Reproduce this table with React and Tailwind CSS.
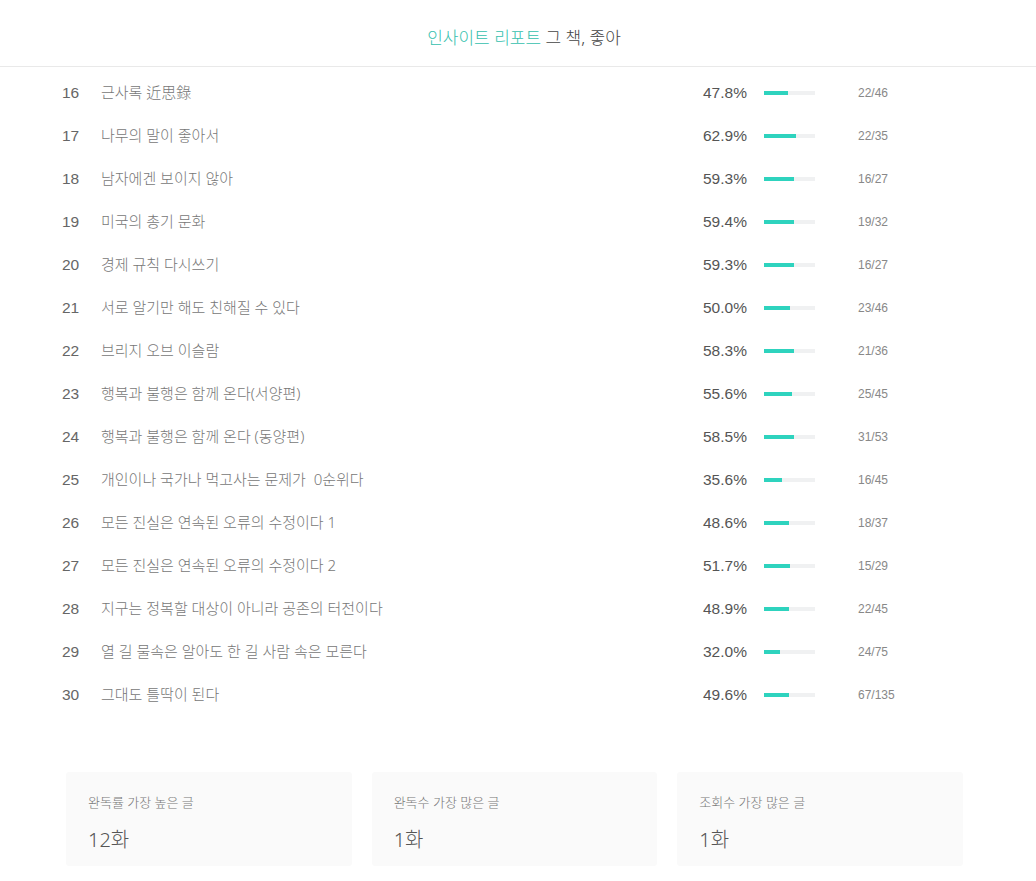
const rows = [
  [16, '근사록 近思錄', 47.8, '22/46'],
  [17, '나무의 말이 좋아서', 62.9, '22/35'],
  [18, '남자에겐 보이지 않아', 59.3, '16/27'],
  [19, '미국의 총기 문화', 59.4, '19/32'],
  [20, '경제 규칙 다시쓰기', 59.3, '16/27'],
  [21, '서로 알기만 해도 친해질 수 있다', 50.0, '23/46'],
  [22, '브리지 오브 이슬람', 58.3, '21/36'],
  [23, '행복과 불행은 함께 온다(서양편)', 55.6, '25/45'],
  [24, '행복과 불행은 함께 온다 (동양편)', 58.5, '31/53'],
  [25, '개인이나 국가나 먹고사는 문제가  0순위다', 35.6, '16/45'],
  [26, '모든 진실은 연속된 오류의 수정이다 1', 48.6, '18/37'],
  [27, '모든 진실은 연속된 오류의 수정이다 2', 51.7, '15/29'],
  [28, '지구는 정복할 대상이 아니라 공존의 터전이다', 48.9, '22/45'],
  [29, '열 길 물속은 알아도 한 길 사람 속은 모른다', 32.0, '24/75'],
  [30, '그대도 틀딱이 된다', 49.6, '67/135'],
];

const cards = [
  ['완독률 가장 높은 글', '12화'],
  ['완독수 가장 많은 글', '1화'],
  ['조회수 가장 많은 글', '1화'],
];

const num = { fontFamily: '"Liberation Sans", sans-serif' };

export default function App() {
  return (
    <div className="min-h-[881px] bg-white" style={{ fontFamily: '"Noto Sans", "Noto Sans CJK KR", sans-serif' }}>
      <header className="h-[67px] border-b border-[#e9e9e9] flex items-center justify-center pt-[10px] pl-[12px]">
        <h1 className="text-[17px] text-[#444] font-light">
          <span className="text-[#35bfae]">인사이트 리포트</span> 그 책, 좋아
        </h1>
      </header>

      <ul className="pt-[4px]">
        {rows.map(([no, title, pct, frac]) => (
          <li key={no} className="h-[43px] flex items-center">
            <span className="w-[39px] pl-[62px] box-content text-[15.5px] text-[#666]" style={num}>{no}</span>
            <span className="w-[602px] text-[15px] text-[#777] font-light whitespace-pre">{title}</span>
            <span className="w-[61px] text-[15.5px] text-[#555]" style={num}>{pct.toFixed(1)}%</span>
            <span className="w-[51px] h-[4px] bg-[#f0f1f2] flex">
              <span className="h-full bg-[#2ed3be]" style={{ width: `${pct}%` }} />
            </span>
            <span className="ml-[43px] text-[12px] text-[#888]" style={num}>{frac}</span>
          </li>
        ))}
      </ul>

      <div className="mt-[56px] ml-[66px] w-[897px] grid grid-cols-3 gap-[20px]">
        {cards.map(([label, value]) => (
          <div key={label} className="h-[94px] bg-[#fafafa] rounded-[3px] pl-[22px] pt-[20px]">
            <div className="text-[13px] text-[#777] font-light leading-[20px]">{label}</div>
            <div className="mt-[16px] text-[20px] text-[#555] font-light leading-[24px]">{value}</div>
          </div>
        ))}
      </div>
    </div>
  );
}
